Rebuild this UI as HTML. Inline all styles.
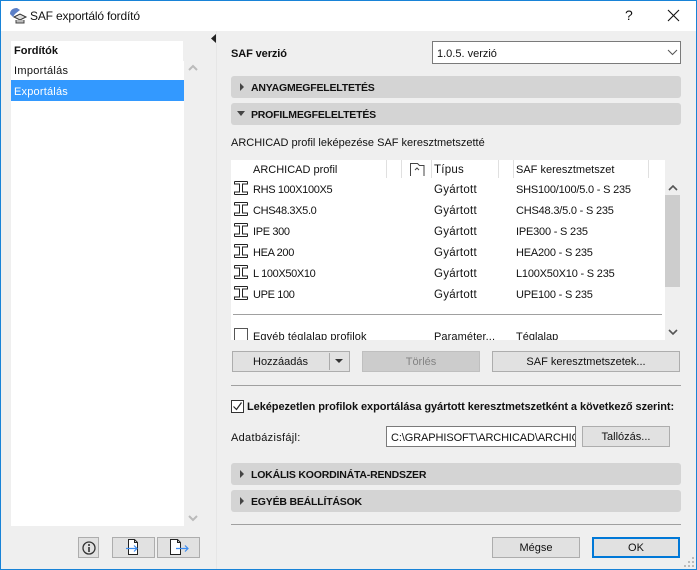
<!DOCTYPE html>
<html><head><meta charset="utf-8"><style>
html,body{margin:0;padding:0}
#w{position:relative;width:697px;height:570px;overflow:hidden;background:#efefef;font:11px "Liberation Sans",sans-serif;color:#111}
#w div,#w svg{position:absolute}
.t{white-space:nowrap;line-height:16px;height:16px;margin-top:1px}
.b{font-weight:bold}
.n{letter-spacing:-.35px}
.g{font-size:11.5px;letter-spacing:.25px}
.s{letter-spacing:-.2px}
.btn{box-sizing:border-box;background:#e1e1e1;border:1px solid #adadad;text-align:center;white-space:nowrap;line-height:20px}
.sec{left:231px;width:450px;height:22px;background:#d4d4d4;border-radius:3px}
.sect{left:251px;font-weight:bold;font-size:10.5px;letter-spacing:-.2px;white-space:nowrap;line-height:16px}
.line{height:1px;background:#a0a0a0}
.hd{width:1px;height:18px;background:#e0e0e0;top:160px}
</style></head><body><div id="w">
<div style="left:0;top:0;width:697px;height:31px;background:#fff"></div>
<div style="left:0;top:0;width:697px;height:1px;background:#1883d7"></div>
<div style="left:0;top:0;width:1px;height:570px;background:#1883d7"></div>
<div style="left:696px;top:0;width:1px;height:570px;background:#1883d7"></div>
<div style="left:0;top:569px;width:697px;height:1px;background:#1883d7"></div>
<svg style="left:9px;top:6px" width="20" height="20" viewBox="0 0 20 20"><path d="M1 8C1 4 4 2 8 2l3 2-5 4-2 3z" fill="#5b7fc7"/><path d="M5 11l6-3 6 3-6 3z" fill="#ddd" stroke="#333"/><path d="M7 14v3h8v-3" fill="#bbb" stroke="#444"/></svg>
<div class="t" style="left:30px;top:7px;font-size:12px;letter-spacing:-.17px">SAF exportáló fordító</div>
<div class="t" style="left:625px;top:6px;font-size:14px">?</div>
<svg style="left:667px;top:9px" width="13" height="13"><path d="M1 1l11 11M12 1L1 12" stroke="#111" stroke-width="1.1" fill="none"/></svg>

<div style="left:11px;top:41px;width:173px;height:485px;background:#fff"></div>
<div style="left:183px;top:41px;width:18px;height:20px;background:#efefef"></div>
<div class="t b" style="left:14px;top:42px">Fordítók</div>
<div class="t" style="left:14px;top:62px;letter-spacing:.3px">Importálás</div>
<div style="left:11px;top:80px;width:173px;height:21px;background:#3399ff"></div>
<div class="t" style="left:14px;top:83px;color:#fff;letter-spacing:.2px">Exportálás</div>
<svg style="left:188px;top:64px" width="10" height="8"><path d="M1 6l4-4 4 4" stroke="#bbb" stroke-width="2" fill="none"/></svg>
<svg style="left:188px;top:514px" width="10" height="8"><path d="M1 2l4 4 4-4" stroke="#bbb" stroke-width="2" fill="none"/></svg>
<svg style="left:210px;top:34px" width="7" height="10"><path d="M6 0v9L1 4.500z" fill="#222"/></svg>
<div style="left:216px;top:31px;width:1px;height:538px;background:#e6e6e6"></div>

<div class="btn" style="left:78px;top:537px;width:21px;height:21px"></div>
<svg style="left:82px;top:541px" width="14" height="14"><circle cx="7" cy="7" r="6" fill="none" stroke="#333" stroke-width="1.300"/><path d="M7 6v5M7 3v2" stroke="#333" stroke-width="1.600"/></svg>
<div class="btn" style="left:112px;top:537px;width:43px;height:21px"></div>
<svg style="left:124px;top:538px" width="20" height="18"><path d="M4.500 1.500h6l3 3v12h-9z" fill="#fff" stroke="#222"/><path d="M10.500 1.500v3h3" fill="none" stroke="#222"/><path d="M2 10.500h11M10 7.500l3 3-3 3" fill="none" stroke="#3c8cf0" stroke-width="1.200"/></svg>
<div class="btn" style="left:157px;top:537px;width:43px;height:21px"></div>
<svg style="left:169px;top:538px" width="22" height="18"><path d="M1.500 1.500h7l3 3v12h-10z" fill="#fff" stroke="#222"/><path d="M8.500 1.500v3h3" fill="none" stroke="#222"/><path d="M7 10.500h12M16 7.500l3 3-3 3" fill="none" stroke="#3c8cf0" stroke-width="1.200"/></svg>

<div class="t b" style="left:231px;top:45px;letter-spacing:-.1px">SAF verzió</div>
<div style="box-sizing:border-box;left:432px;top:41px;width:249px;height:23px;background:#fff;border:1px solid #7a7a7a"></div>
<div class="t" style="left:437px;top:45px">1.0.5. verzió</div>
<svg style="left:667px;top:49px" width="11" height="7"><path d="M1 1l4.500 4.500L10 1" stroke="#555" fill="none"/></svg>

<div class="sec" style="top:76px"></div>
<svg style="left:239px;top:83px" width="6" height="9"><path d="M1 0l4 4-4 4z" fill="#444"/></svg>
<div class="sect" style="top:80px">ANYAGMEGFELELTETÉS</div>
<div class="sec" style="top:103px"></div>
<svg style="left:237px;top:111px" width="9" height="6"><path d="M0 0h8L4 5z" fill="#444"/></svg>
<div class="sect" style="top:107px">PROFILMEGFELELTETÉS</div>
<div class="t" style="left:231px;top:134px">ARCHICAD profil leképezése SAF keresztmetszetté</div>

<div style="left:231px;top:160px;width:434px;height:180px;background:#fff;overflow:hidden"></div>
<div class="hd" style="left:386px"></div><div class="hd" style="left:401px"></div><div class="hd" style="left:431px"></div><div class="hd" style="left:498px"></div><div class="hd" style="left:513px"></div><div class="hd" style="left:648px"></div>
<div class="t" style="left:253px;top:161px">ARCHICAD profil</div>
<svg style="left:409px;top:162px" width="16" height="15"><path d="M1.500 14V1.500h7l2 2h4.500V14" fill="none" stroke="#444"/><path d="M6 8l2-2 2 2" fill="none" stroke="#444"/></svg>
<div class="t g" style="left:434px;top:161px">Típus</div>
<div class="t" style="left:516px;top:161px">SAF keresztmetszet</div>

<svg style="left:233px;top:180px" width="16" height="120" fill="none" stroke="#222" stroke-width="1"><g id="i"><path d="M1.500 1.500h13M1.500 14.500h13M1.500 1.500v2.500h5v8h-5v2.500M14.500 1.500v2.500h-5v8h5v2.500"/></g><use href="#i" y="21"/><use href="#i" y="42"/><use href="#i" y="63"/><use href="#i" y="84"/><use href="#i" y="105"/></svg>

<div class="t n" style="left:253px;top:181px">RHS 100X100X5</div><div class="t g" style="left:434px;top:181px">Gyártott</div><div class="t s" style="left:516px;top:181px">SHS100/100/5.0 - S 235</div>
<div class="t n" style="left:253px;top:202px">CHS48.3X5.0</div><div class="t g" style="left:434px;top:202px">Gyártott</div><div class="t s" style="left:516px;top:202px">CHS48.3/5.0 - S 235</div>
<div class="t n" style="left:253px;top:223px">IPE 300</div><div class="t g" style="left:434px;top:223px">Gyártott</div><div class="t s" style="left:516px;top:223px">IPE300 - S 235</div>
<div class="t n" style="left:253px;top:244px">HEA 200</div><div class="t g" style="left:434px;top:244px">Gyártott</div><div class="t s" style="left:516px;top:244px">HEA200 - S 235</div>
<div class="t n" style="left:253px;top:265px">L 100X50X10</div><div class="t g" style="left:434px;top:265px">Gyártott</div><div class="t s" style="left:516px;top:265px">L100X50X10 - S 235</div>
<div class="t n" style="left:253px;top:286px">UPE 100</div><div class="t g" style="left:434px;top:286px">Gyártott</div><div class="t s" style="left:516px;top:286px">UPE100 - S 235</div>
<div class="line" style="left:233px;top:314px;width:429px"></div>
<div style="left:231px;top:325px;width:434px;height:15px;overflow:hidden">
<div style="box-sizing:border-box;left:3px;top:3px;width:14px;height:14px;border:1px solid #555;background:#fff"></div>
<div class="t" style="left:22px;top:3px;letter-spacing:.1px">Egyéb téglalap profilok</div><div class="t" style="left:203px;top:3px;letter-spacing:.1px">Paraméter...</div><div class="t" style="left:285px;top:3px">Téglalap</div></div>

<div style="left:665px;top:160px;width:16px;height:180px;background:#efefef"></div>
<div style="left:665px;top:195px;width:15px;height:92px;background:#cdcdcd"></div>
<svg style="left:668px;top:185px" width="10" height="7"><path d="M1 5l4-4 4 4" stroke="#555" stroke-width="1.600" fill="none"/></svg>
<svg style="left:668px;top:329px" width="10" height="7"><path d="M1 1l4 4 4-4" stroke="#555" stroke-width="1.600" fill="none"/></svg>

<div class="btn" style="left:232px;top:351px;width:118px;height:21px;text-align:left;padding-left:20px">Hozzáadás</div>
<div style="left:329px;top:353px;width:1px;height:17px;background:#aaa"></div>
<svg style="left:335px;top:359px" width="9" height="5"><path d="M0 0h8L4 4z" fill="#333"/></svg>
<div class="btn" style="left:362px;top:351px;width:118px;height:21px;background:#ccc;color:#838383;border-color:#bfbfbf">Törlés</div>
<div class="btn" style="left:492px;top:351px;width:188px;height:21px">SAF keresztmetszetek...</div>
<div class="line" style="left:231px;top:385px;width:450px"></div>

<div style="box-sizing:border-box;left:231px;top:400px;width:13px;height:13px;border:1px solid #333;background:#fff"></div>
<svg style="left:232px;top:401px" width="11" height="11"><path d="M1.500 5.500l3 3 5-7" stroke="#222" fill="none" stroke-width="1.200"/></svg>
<div class="t b" style="left:247px;top:398px;letter-spacing:-.07px">Leképezetlen profilok exportálása gyártott keresztmetszetként a következő szerint:</div>

<div class="t" style="left:231px;top:429px;letter-spacing:.3px">Adatbázisfájl:</div>
<div style="box-sizing:border-box;left:386px;top:426px;width:190px;height:21px;background:#fff;border:1px solid #7a7a7a;overflow:hidden"><div class="t" style="left:4px;top:2px;letter-spacing:-.1px">C:\GRAPHISOFT\ARCHICAD\ARCHICAD</div></div>
<div class="btn" style="left:582px;top:426px;width:88px;height:21px">Tallózás...</div>

<div class="sec" style="top:463px"></div>
<svg style="left:239px;top:470px" width="6" height="9"><path d="M1 0l4 4-4 4z" fill="#444"/></svg>
<div class="sect" style="top:467px">LOKÁLIS KOORDINÁTA-RENDSZER</div>
<div class="sec" style="top:490px"></div>
<svg style="left:239px;top:497px" width="6" height="9"><path d="M1 0l4 4-4 4z" fill="#444"/></svg>
<div class="sect" style="top:494px">EGYÉB BEÁLLÍTÁSOK</div>
<div class="line" style="left:231px;top:524px;width:450px"></div>

<div class="btn" style="left:492px;top:537px;width:88px;height:21px">Mégse</div>
<div class="btn" style="left:592px;top:537px;width:88px;height:21px;border:2px solid #0078d7;line-height:18px">OK</div>
<svg style="left:684px;top:557px" width="12" height="12" fill="#bbb"><rect x="8" y="0" width="2" height="2"/><rect x="4" y="4" width="2" height="2"/><rect x="8" y="4" width="2" height="2"/><rect x="0" y="8" width="2" height="2"/><rect x="4" y="8" width="2" height="2"/><rect x="8" y="8" width="2" height="2"/></svg>
</div></body></html>
